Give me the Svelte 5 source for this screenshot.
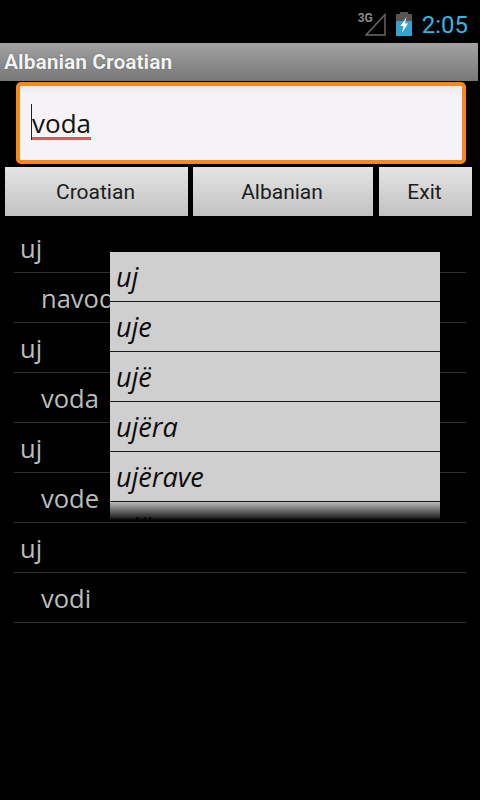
<script>
  const rows = [
    { text: 'uj', sub: false },
    { text: 'navod', sub: true },
    { text: 'uj', sub: false },
    { text: 'voda', sub: true },
    { text: 'uj', sub: false },
    { text: 'vode', sub: true },
    { text: 'uj', sub: false },
    { text: 'vodi', sub: true }
  ];
  const suggestions = ['uj', 'uje', 'ujë', 'ujëra', 'ujërave', 'ujës'];
</script>

<div class="page">
  <header class="status">
    <span class="net">3G</span>
    <svg class="signal" width="21" height="23" viewBox="0 0 21 23">
      <path d="M1 22 L20 1.5 V22 Z" fill="none" stroke="#6a6a6a" stroke-width="1.4" />
    </svg>
    <svg class="battery" width="16" height="24" viewBox="0 0 16 24">
      <rect x="4" y="0" width="8" height="3" fill="#555" />
      <rect x="0" y="2" width="16" height="7" fill="#555" />
      <rect x="0" y="9" width="16" height="15" fill="#35a3cf" />
      <path d="M10.5 5 L4.5 14 H7.5 L6 21 L12 11.5 H9 Z" fill="#fff" />
    </svg>
    <span class="clock">2:05</span>
  </header>

  <div class="title">Albanian Croatian</div>

  <div class="field">
    <div class="input"><span class="word">voda</span></div>
  </div>

  <div class="buttons">
    <button class="b1">Croatian</button>
    <button class="b2">Albanian</button>
    <button class="b3">Exit</button>
  </div>

  <div class="list">
    {#each rows as r}
      <div class="row" class:sub={r.sub}>{r.text}</div>
    {/each}
    <div class="drop">
      {#each suggestions as s}
        <div class="opt">{s}</div>
      {/each}
      <div class="fade"></div>
    </div>
  </div>
</div>

<style>
  :global(body) {
    margin: 0;
    background: #000;
  }
  .page {
    width: 480px;
    height: 800px;
    background: #000;
    overflow: hidden;
    display: flex;
    flex-direction: column;
  }
  .status {
    height: 43px;
    display: flex;
    align-items: flex-start;
    justify-content: flex-end;
    padding-right: 12px;
    box-sizing: border-box;
  }
  .net {
    font: bold 12px/12px "Roboto", sans-serif;
    color: #8a8a8a;
    margin-top: 12px;
    margin-right: -8px;
  }
  .signal {
    margin-top: 13px;
    margin-right: 10px;
  }
  .battery {
    margin-top: 12px;
    margin-right: 10px;
  }
  .clock {
    font: 24px/28px "Roboto", sans-serif;
    color: #33b5e5;
    margin-top: 11px;
  }
  .title {
    height: 38px;
    margin-right: 2px;
    padding-left: 4px;
    background: linear-gradient(#a2a2a2, #777);
    color: #f4f4f4;
    font: bold 21px/38px "Roboto", sans-serif;
    text-shadow: 0 0 1px #333;
  }
  .field {
    padding: 1px 14px 0 16px;
    height: 86px;
    box-sizing: border-box;
  }
  .input {
    height: 82px;
    box-sizing: border-box;
    border: 4px solid #f6891a;
    border-radius: 5px;
    background: linear-gradient(#ececea 0, #f6f3f7 10px);
    padding: 18px 0 0 12px;
    font: 26px/36px "Open Sans", sans-serif;
    color: #111;
  }
  .word {
    display: inline-block;
    height: 36px;
    line-height: 38px;
    border-left: 1px solid #222;
    margin-left: -1px;
    box-shadow: inset 0 -3px 0 #e8505b;
  }
  .buttons {
    display: flex;
    padding-left: 5px;
    gap: 5px;
  }
  button {
    height: 49px;
    border: 0;
    padding: 0 2px 0 0;
    background: linear-gradient(#e4e4e4, #c2c2c2);
    color: #1c1c1c;
    font: 21px "Roboto", sans-serif;
  }
  .b1 { width: 183px; }
  .b2 { width: 180px; }
  .b3 { width: 93px; margin-left: 1px; }
  .list {
    position: relative;
    margin-top: 7px;
    padding: 0 14px;
    flex: 1;
  }
  .row {
    height: 49px;
    border-bottom: 1px solid #2e2e2e;
    padding-left: 6px;
    color: #bdbdbd;
    font: 25.5px/51px "Open Sans", sans-serif;
    white-space: nowrap;
  }
  .row.sub {
    padding-left: 27px;
  }
  .drop {
    position: absolute;
    left: 110px;
    top: 29px;
    width: 330px;
    height: 268px;
    background: #cfcfcf;
    overflow: hidden;
  }
  .opt {
    height: 49px;
    border-bottom: 1px solid #1a1a1a;
    padding-left: 6px;
    color: #0a0a0a;
    font: italic 27px/50px "Open Sans", sans-serif;
  }
  .fade {
    position: absolute;
    left: 0;
    right: 0;
    bottom: 0;
    height: 18px;
    background: linear-gradient(rgba(0, 0, 0, 0.1), rgba(0, 0, 0, 0.8) 85%, #000);
  }
</style>
